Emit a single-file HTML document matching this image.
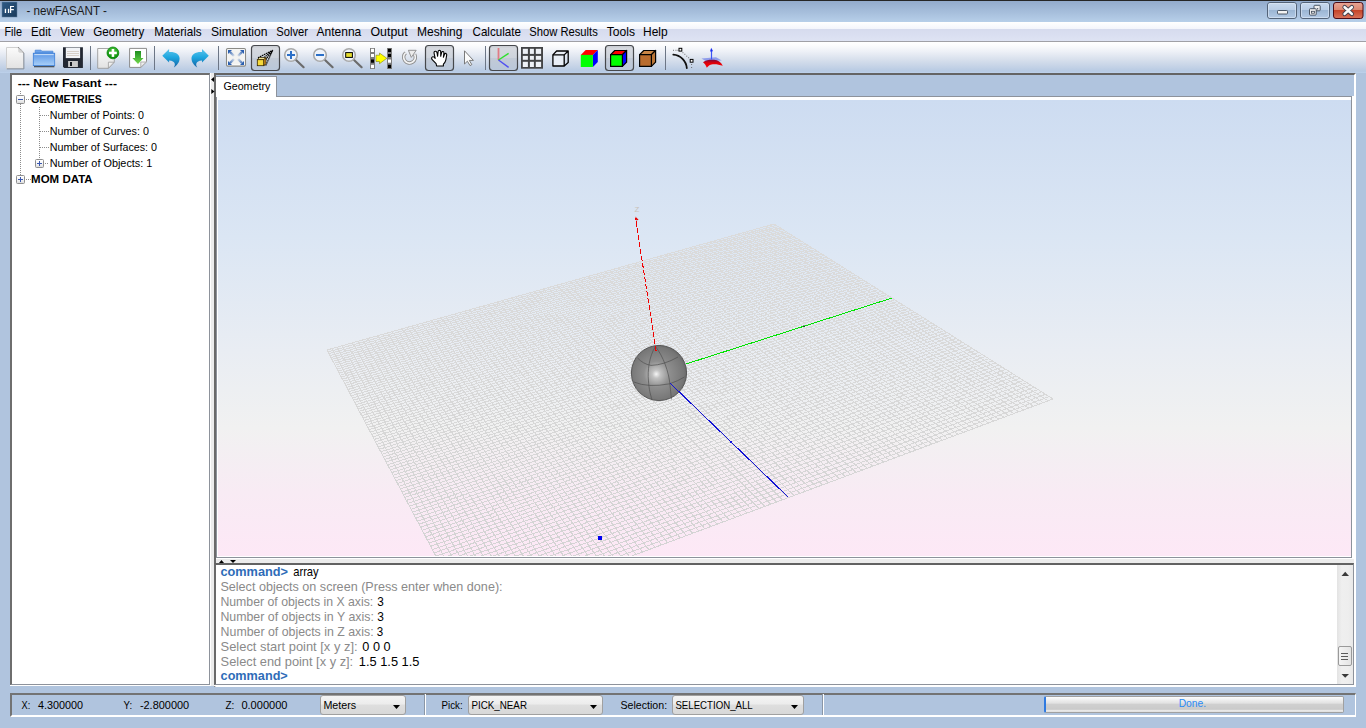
<!DOCTYPE html><html><head><meta charset="utf-8"><title>newFASANT</title><style>
*{margin:0;padding:0;box-sizing:border-box}
html,body{width:1366px;height:728px;overflow:hidden}
body{position:relative;background:#b0c4de;font-family:"Liberation Sans",sans-serif}
.a{position:absolute}
#title{left:0;top:0;width:1366px;height:22px;border-top:1px solid #262626;
 background:linear-gradient(#93abcc,#b7cfe9)}
#menu{left:0;top:22px;width:1366px;height:20px;border-bottom:1px solid #a0a0a6;
 background:linear-gradient(#ffffff 0px,#f3f5fb 7px,#d6dbee 7px,#dee3f3 19px)}
#tool{left:0;top:42px;width:1366px;height:31px;background:linear-gradient(#ffffff 0%,#fcfcfd 10%,#eef1f7 30%,#d9e1ed 55%,#c4d2e6 80%,#b7cae3 94%,#bdd2ec 100%)}
#tree{left:10px;top:73px;width:200px;height:612px;background:#fff;
 border-top:2px solid #6e6e6e;border-left:2px solid #6e6e6e;border-right:1px solid #8d929b;border-bottom:1px solid #8d929b}
#treehl{left:10px;top:685px;width:201px;height:1px;background:#fff}
#vsplit{left:210px;top:73px;width:4px;height:613px;background:#ececec;border-left:1px solid #fff}
#rp{left:214px;top:73px;width:1142px;height:614px;border-top:2px solid #646464;border-left:2px solid #6a6a6a;
 border-right:2px solid #fff;border-bottom:1px solid #fff;background:#b0c4de}
#cvw{left:1352px;top:96px;width:2px;height:467px;background:#fff}
#tab{left:216px;top:76px;width:61px;height:22px;background:#fff;border-top:1px solid #8d929b;border-right:1px solid #8d929b}
#strip{left:277px;top:96px;width:1075px;height:1px;background:#8d929b}
#cv{left:216px;top:97px;width:1136px;height:461px;background:#fff;border-left:1px solid #8d929b;border-right:1px solid #8d929b;border-bottom:1px solid #8d929b}
#canvas{left:218px;top:100px;width:1133px;height:456px;
 background:linear-gradient(#cddcf1 0%,#dbe6f4 30%,#e9edf3 55%,#f1f1f1 72%,#f8ebf4 86%,#fde8f6 100%)}
#hsplit{left:216px;top:558px;width:1138px;height:5px;background:#ececec;border-top:1px solid #fff}
#con{left:214px;top:563px;width:1140px;height:122px;background:#fff;border-top:2px solid #626262;border-left:2px solid #6a6a6a;
 border-right:1px solid #8d929b;border-bottom:1px solid #8d929b}
#conhl{left:214px;top:685px;width:1142px;height:1px;background:#fff}
#sb{left:1337px;top:565px;width:16px;height:119px;background:linear-gradient(90deg,#e3e3e3,#efefef 30%,#eeeeee 70%,#e8e8e8)}
#thumb{left:1338px;top:646px;width:14px;height:20px;border:1px solid #9a9a9a;border-radius:2px;background:linear-gradient(90deg,#f4f4f4,#e4e4e4)}
#status{left:10px;top:693px;width:1346px;height:24px;border-top:2px solid #737373;border-left:2px solid #737373;
 border-right:1px solid #fff;border-bottom:2px solid #fff;background:#b0c4de}
.cb{height:20px;border:1px solid #a0a0a0;border-radius:3px;background:linear-gradient(#f4f4f4,#ececec 45%,#dedede 50%,#d8d8d8)}
.sep{width:2px;height:21px;border-left:1px solid #8a96a6;border-right:1px solid #fff;top:694px}
#prog{left:1044px;top:696px;width:300px;height:17px;border:1px solid #a0a0a0;border-radius:2px;border-left:2px solid #2f7ae0;
 background:linear-gradient(#fdfdfd,#f2f2f2 15%,#e2e2e2 40%,#cfcfcf 50%,#cacaca 82%,#efefef 92%,#d8d8d8)}
</style></head><body>
<div class="a" id="title"></div>
<div class="a" id="menu"></div>
<div class="a" id="tool"></div>
<div class="a" id="tree"></div><div class="a" id="treehl"></div>
<div class="a" id="vsplit"></div>
<div class="a" id="rp"></div>
<div class="a" id="tab"></div><div class="a" id="strip"></div>
<div class="a" id="cvw"></div><div class="a" id="cv"></div><div class="a" id="canvas"></div>
<div class="a" id="hsplit"></div>
<div class="a" id="con"></div><div class="a" id="conhl"></div>
<div class="a" id="sb"></div><div class="a" id="thumb"></div>
<div class="a" id="status"></div>
<div class="a sep" style="left:424px"></div>
<div class="a sep" style="left:822px"></div>
<div class="a cb" style="left:320px;top:695px;width:86px"></div>
<div class="a cb" style="left:468px;top:695px;width:135px"></div>
<div class="a cb" style="left:672px;top:695px;width:132px"></div>
<div class="a" id="prog"></div>
<svg class="a" style="left:218px;top:100px" width="1133" height="456" viewBox="218 100 1133 456"><defs><radialGradient id="sph" cx="0.47" cy="0.52" r="0.62" fx="0.45" fy="0.52"><stop offset="0" stop-color="#f6f6f6"/><stop offset="0.12" stop-color="#c2c2c2"/><stop offset="0.38" stop-color="#8e8e8e"/><stop offset="0.78" stop-color="#767676"/><stop offset="1" stop-color="#555555"/></radialGradient></defs><defs><linearGradient id="gGrid" gradientUnits="userSpaceOnUse" x1="0" y1="224" x2="0" y2="560"><stop offset="0" stop-color="#dbdbdb"/><stop offset="0.45" stop-color="#d9d9d9"/><stop offset="1" stop-color="#d3d3d3"/></linearGradient></defs><path d="M327.0 350.0L468.0 617.0M327.0 350.0L774.0 224.0M332.1 348.6L475.1 614.4M328.0 351.9L776.1 225.3M337.2 347.1L482.1 611.7M329.0 353.7L778.1 226.6M342.3 345.7L489.1 609.1M330.0 355.6L780.2 227.9M347.4 344.3L496.1 606.5M331.0 357.5L782.3 229.2M352.4 342.8L503.0 604.0M332.0 359.4L784.4 230.5M357.5 341.4L509.9 601.4M333.0 361.3L786.5 231.8M362.5 340.0L516.8 598.8M334.0 363.3L788.6 233.2M367.5 338.6L523.7 596.3M335.0 365.2L790.7 234.5M372.5 337.2L530.5 593.7M336.1 367.2L792.9 235.8M377.5 335.8L537.3 591.2M337.1 369.1L795.0 237.2M382.4 334.4L544.1 588.7M338.1 371.1L797.2 238.5M387.4 333.0L550.8 586.1M339.2 373.1L799.4 239.9M392.3 331.6L557.5 583.6M340.3 375.1L801.6 241.3M397.3 330.2L564.2 581.1M341.3 377.1L803.8 242.7M402.2 328.8L570.9 578.7M342.4 379.2L806.0 244.1M407.1 327.4L577.5 576.2M343.5 381.2L808.2 245.5M411.9 326.1L584.1 573.7M344.6 383.3L810.4 246.9M416.8 324.7L590.7 571.3M345.7 385.3L812.7 248.3M421.7 323.3L597.3 568.8M346.8 387.4L815.0 249.7M426.5 322.0L603.8 566.4M347.9 389.5L817.2 251.1M431.3 320.6L610.3 564.0M349.0 391.6L819.5 252.6M436.2 319.2L616.8 561.6M350.1 393.7L821.8 254.0M441.0 317.9L623.2 559.1M351.2 395.9L824.1 255.5M445.7 316.5L629.7 556.8M352.4 398.0L826.5 256.9M450.5 315.2L636.1 554.4M353.5 400.2L828.8 258.4M455.3 313.8L642.4 552.0M354.7 402.4L831.2 259.9M460.0 312.5L648.8 549.6M355.8 404.6L833.5 261.3M464.8 311.2L655.1 547.3M357.0 406.8L835.9 262.8M469.5 309.8L661.4 544.9M358.2 409.0L838.3 264.3M474.2 308.5L667.7 542.6M359.3 411.3L840.7 265.9M478.9 307.2L673.9 540.3M360.5 413.5L843.2 267.4M483.6 305.9L680.2 537.9M361.7 415.8L845.6 268.9M488.2 304.6L686.4 535.6M362.9 418.1L848.0 270.4M492.9 303.2L692.6 533.3M364.2 420.4L850.5 272.0M497.5 301.9L698.7 531.0M365.4 422.7L853.0 273.5M502.2 300.6L704.8 528.7M366.6 425.0L855.5 275.1M506.8 299.3L710.9 526.5M367.9 427.4L858.0 276.7M511.4 298.0L717.0 524.2M369.1 429.7L860.5 278.3M516.0 296.7L723.1 521.9M370.4 432.1L863.1 279.9M520.5 295.4L729.1 519.7M371.6 434.5L865.6 281.5M525.1 294.2L735.1 517.5M372.9 436.9L868.2 283.1M529.7 292.9L741.1 515.2M374.2 439.4L870.8 284.7M534.2 291.6L747.1 513.0M375.5 441.8L873.4 286.3M538.7 290.3L753.0 510.8M376.8 444.3L876.0 288.0M543.3 289.0L759.0 508.6M378.1 446.8L878.6 289.6M547.8 287.8L764.8 506.4M379.4 449.3L881.3 291.3M552.2 286.5L770.7 504.2M380.8 451.8L884.0 293.0M556.7 285.2L776.6 502.0M382.1 454.3L886.6 294.7M561.2 284.0L782.4 499.8M383.4 456.9L889.3 296.3M565.7 282.7L788.2 497.7M384.8 459.5L892.1 298.0M570.1 281.5L794.0 495.5M386.2 462.0L894.8 299.8M574.5 280.2L799.8 493.4M387.5 464.7L897.5 301.5M578.9 279.0L805.5 491.2M388.9 467.3L900.3 303.2M583.4 277.7L811.2 489.1M390.3 469.9L903.1 305.0M587.7 276.5L816.9 487.0M391.7 472.6L905.9 306.7M592.1 275.3L822.6 484.9M393.2 475.3L908.7 308.5M596.5 274.0L828.3 482.7M394.6 478.0L911.5 310.3M600.9 272.8L833.9 480.6M396.0 480.7L914.4 312.1M605.2 271.6L839.5 478.6M397.5 483.5L917.3 313.9M609.6 270.4L845.1 476.5M399.0 486.3L920.2 315.7M613.9 269.1L850.7 474.4M400.4 489.0L923.1 317.5M618.2 267.9L856.2 472.3M401.9 491.9L926.0 319.3M622.5 266.7L861.8 470.3M403.4 494.7L928.9 321.2M626.8 265.5L867.3 468.2M404.9 497.5L931.9 323.0M631.1 264.3L872.8 466.2M406.4 500.4L934.9 324.9M635.3 263.1L878.2 464.1M408.0 503.3L937.9 326.8M639.6 261.9L883.7 462.1M409.5 506.2L940.9 328.7M643.8 260.7L889.1 460.1M411.1 509.2L944.0 330.6M648.1 259.5L894.5 458.1M412.6 512.1L947.0 332.5M652.3 258.3L899.9 456.0M414.2 515.1L950.1 334.5M656.5 257.1L905.3 454.0M415.8 518.1L953.2 336.4M660.7 255.9L910.7 452.0M417.4 521.2L956.3 338.4M664.9 254.8L916.0 450.1M419.0 524.2L959.5 340.3M669.1 253.6L921.3 448.1M420.6 527.3L962.6 342.3M673.2 252.4L926.6 446.1M422.3 530.4L965.8 344.3M677.4 251.2L931.9 444.1M423.9 533.6L969.0 346.3M681.5 250.1L937.1 442.2M425.6 536.7L972.3 348.4M685.7 248.9L942.4 440.2M427.3 539.9L975.5 350.4M689.8 247.7L947.6 438.3M429.0 543.1L978.8 352.4M693.9 246.6L952.8 436.3M430.7 546.3L982.1 354.5M698.0 245.4L958.0 434.4M432.4 549.6L985.4 356.6M702.1 244.3L963.1 432.5M434.1 552.9L988.7 358.7M706.2 243.1L968.3 430.6M435.9 556.2L992.1 360.8M710.3 242.0L973.4 428.7M437.7 559.5L995.5 362.9M714.3 240.8L978.5 426.8M439.4 562.9L998.9 365.1M718.4 239.7L983.6 424.9M441.2 566.3L1002.3 367.2M722.4 238.5L988.7 423.0M443.0 569.7L1005.8 369.4M726.4 237.4L993.7 421.1M444.9 573.2L1009.3 371.6M730.5 236.3L998.8 419.2M446.7 576.7L1012.8 373.8M734.5 235.1L1003.8 417.3M448.6 580.2L1016.3 376.0M738.5 234.0L1008.8 415.5M450.4 583.7L1019.9 378.2M742.5 232.9L1013.8 413.6M452.3 587.3L1023.4 380.5M746.4 231.8L1018.7 411.8M454.2 590.9L1027.0 382.7M750.4 230.7L1023.7 409.9M456.1 594.5L1030.7 385.0M754.4 229.5L1028.6 408.1M458.1 598.2L1034.3 387.3M758.3 228.4L1033.5 406.3M460.0 601.9L1038.0 389.6M762.2 227.3L1038.4 404.4M462.0 605.6L1041.7 391.9M766.2 226.2L1043.3 402.6M464.0 609.4L1045.4 394.3M770.1 225.1L1048.2 400.8M466.0 613.2L1049.2 396.6M774.0 224.0L1053.0 399.0M468.0 617.0L1053.0 399.0" stroke="url(#gGrid)" stroke-width="1" fill="none" shape-rendering="crispEdges"/><path d="M635.3 216.5L638.6 219.8L636.4 220.4Z" fill="#e00000"/><text x="634.6" y="212" font-size="8" fill="#c9c1b8" textLength="4.8" lengthAdjust="spacingAndGlyphs">Z</text><line x1="686" y1="364" x2="892" y2="298" stroke="#00e400" stroke-width="1" shape-rendering="crispEdges"/><rect x="803" y="325.5" width="2" height="1.5" fill="#106010"/><circle cx="659" cy="373" r="27.6" fill="url(#sph)" stroke="#4e4e4e" stroke-width="0.9"/><g fill="none" stroke="#505050" stroke-width="0.7"><path d="M655.4 346.7C649 356 647.5 372 648.4 380C649 390 650.5 395 652 399.5"/><path d="M655.8 347C663 356 669 372 670 385C670.7 392 671.2 396 671.4 399.5"/><path d="M637.5 357.9Q643 364 651 365.4Q664 365 678 357"/><path d="M633.9 382Q648 388 669.6 383.8Q678 381 684.5 377"/></g><line x1="656.1" y1="351" x2="635.5" y2="218" stroke="#f00000" stroke-width="1" stroke-dasharray="5 2" shape-rendering="crispEdges"/><line x1="670" y1="383" x2="788" y2="497" stroke="#1414d4" stroke-width="1" shape-rendering="crispEdges"/><rect x="730" y="441" width="2" height="2" fill="#1010e0"/><rect x="598" y="536" width="4" height="4" fill="#0000f0"/></svg>
<svg class="a" style="left:0;top:0" width="1366" height="728" viewBox="0 0 1366 728" font-family="Liberation Sans, sans-serif">
<defs>
<linearGradient id="gPage" x1="0" y1="0" x2="0" y2="1"><stop offset="0" stop-color="#fbfbfb"/><stop offset="1" stop-color="#e2e2e2"/></linearGradient>
<linearGradient id="gFold" x1="0" y1="0" x2="1" y2="1"><stop offset="0" stop-color="#ffffff"/><stop offset="1" stop-color="#c8c8c8"/></linearGradient>
<linearGradient id="gFolder" x1="0" y1="0" x2="0" y2="1"><stop offset="0" stop-color="#5b96e6"/><stop offset="1" stop-color="#a9d0f8"/></linearGradient>
<linearGradient id="gArrowG" x1="0" y1="0" x2="0" y2="1"><stop offset="0" stop-color="#1f8d1f"/><stop offset="0.5" stop-color="#45b435"/><stop offset="1" stop-color="#78d84e"/></linearGradient>
<linearGradient id="gUndo" x1="0" y1="0" x2="0" y2="1"><stop offset="0" stop-color="#5cc4ec"/><stop offset="0.45" stop-color="#1ea6df"/><stop offset="1" stop-color="#1562a5"/></linearGradient>
<linearGradient id="gPress" x1="0" y1="0" x2="0" y2="1"><stop offset="0" stop-color="#c6c9cf"/><stop offset="0.12" stop-color="#d6d9df"/><stop offset="0.5" stop-color="#cdd3dc"/><stop offset="0.52" stop-color="#c2cad6"/><stop offset="1" stop-color="#b9c7da"/></linearGradient>
<radialGradient id="gGreen" cx="0.5" cy="0.35" r="0.6"><stop offset="0" stop-color="#5cd04a"/><stop offset="1" stop-color="#058a05"/></radialGradient>
<linearGradient id="gHandle" x1="0" y1="0" x2="1" y2="0"><stop offset="0" stop-color="#8a8a8a"/><stop offset="1" stop-color="#5a5a5a"/></linearGradient>
</defs>
<g id="toolbar">
<!-- new -->
<path d="M6.5 47.5H18.2L23.5 52.8V68.5H6.5Z" fill="url(#gPage)" stroke="#cfcfcf"/>
<path d="M23.9 53V68.9H6.8" fill="none" stroke="#7d8896" stroke-width="0.9"/>
<path d="M18.2 47.5L23.5 52.8" stroke="#6f6f6f" stroke-width="1.1" stroke-dasharray="1 0.6"/>
<path d="M18.2 47.8V51.5Q18.5 52.6 19.7 52.8H23.2Z" fill="#d4d4d4"/>
<!-- folder -->
<path d="M35.2 53V50.2H41L42 51.2H52.9V53Z" fill="#6aa2ea" stroke="#4a86d8" stroke-width="0.8"/>
<rect x="33.3" y="53.2" width="21.4" height="12.4" fill="url(#gFolder)" stroke="#3d7fd8" stroke-width="0.8"/>
<rect x="34.3" y="54.2" width="19.4" height="0.9" fill="#d8e8fb"/>
<rect x="34" y="66" width="20.4" height="1.3" fill="#4a535e"/>
<!-- floppy -->
<path d="M63 47.2H82.9V67.9H64.2L63 66.7Z" fill="#232833"/>
<rect x="65.8" y="47.6" width="14.3" height="10.5" fill="#f1f3f7"/>
<rect x="67" y="51" width="12" height="0.9" fill="#d3cbc3"/>
<rect x="67" y="53" width="12" height="0.9" fill="#d3cbc3"/>
<rect x="67" y="55" width="12" height="0.9" fill="#d3cbc3"/>
<rect x="68.1" y="61" width="9.8" height="6" fill="#c9c9c9"/>
<rect x="70" y="62" width="2" height="4" fill="#15181e"/>
<!-- separators -->
<rect x="90" y="46" width="1" height="24" fill="#6c7686"/>
<rect x="154" y="46" width="1" height="24" fill="#6c7686"/>
<rect x="218" y="46" width="1" height="24" fill="#6c7686"/>
<rect x="485" y="46" width="1" height="24" fill="#6c7686"/>
<rect x="665" y="46" width="1" height="24" fill="#6c7686"/>
<!-- new + -->
<path d="M97.7 48.5H111L114.3 52V61.8L108.4 68.3H97.7Z" fill="url(#gPage)" stroke="#9c9c9c" stroke-width="0.9"/>
<path d="M108.4 68.3V62.2H114.3Z" fill="url(#gFold)" stroke="#9c9c9c" stroke-width="0.8"/>
<circle cx="112.9" cy="52.9" r="5.9" fill="url(#gGreen)" stroke="#0a8a0a" stroke-width="0.8"/>
<rect x="109" y="51.7" width="7.8" height="2.5" fill="#fff"/>
<rect x="111.7" y="49" width="2.5" height="7.9" fill="#fff"/>
<!-- import -->
<path d="M129.6 48.4H146.5V61.5L140.8 67.4H129.6Z" fill="#fff" stroke="#8c8c8c" stroke-width="1"/>
<path d="M140.8 67.4V62H146.5Z" fill="url(#gFold)" stroke="#9c9c9c" stroke-width="0.8"/>
<path d="M135 51H141V58H143.5L138 64.1L132.4 58H135Z" fill="url(#gArrowG)"/>
<!-- undo / redo -->
<path id="undo" d="M162.3 55.7L169.1 49V52.1C175.5 51.8 179.6 54.3 179.6 58.6C179.6 62.2 177 65.5 173.8 67.6C175.6 64.6 175.8 61 169.1 60.4V62.6Z" fill="url(#gUndo)"/>
<path d="M162.3 55.7L169.1 49V52.1C175.5 51.8 179.6 54.3 179.6 58.6C179.6 62.2 177 65.5 173.8 67.6C175.6 64.6 175.8 61 169.1 60.4V62.6Z" fill="url(#gUndo)" transform="translate(371.1 0) scale(-1 1)"/>
<!-- fit -->
<defs>
<linearGradient id="gF1" gradientUnits="userSpaceOnUse" x1="229" y1="51" x2="234" y2="56"><stop offset="0" stop-color="#2a5fb0"/><stop offset="1" stop-color="#2a5fb0" stop-opacity="0.15"/></linearGradient>
<linearGradient id="gF2" gradientUnits="userSpaceOnUse" x1="243" y1="51" x2="238" y2="56"><stop offset="0" stop-color="#2a5fb0"/><stop offset="1" stop-color="#2a5fb0" stop-opacity="0.15"/></linearGradient>
<linearGradient id="gF3" gradientUnits="userSpaceOnUse" x1="229" y1="64" x2="234" y2="59"><stop offset="0" stop-color="#2a5fb0"/><stop offset="1" stop-color="#2a5fb0" stop-opacity="0.15"/></linearGradient>
<linearGradient id="gF4" gradientUnits="userSpaceOnUse" x1="243" y1="64" x2="238" y2="59"><stop offset="0" stop-color="#2a5fb0"/><stop offset="1" stop-color="#2a5fb0" stop-opacity="0.15"/></linearGradient>
</defs>
<rect x="226.6" y="48.6" width="18.8" height="17.4" rx="1.2" fill="#f3f3f1" stroke="#8a8a86" stroke-width="1.3"/>
<rect x="227.7" y="49.7" width="16.6" height="15.2" fill="none" stroke="#fff" stroke-width="0.8"/>
<path d="M228 50H232L228 54Z" fill="#2a5fb0"/><path d="M230 52L234 56" stroke="url(#gF1)" stroke-width="2.4"/>
<path d="M244 50H240L244 54Z" fill="#2a5fb0"/><path d="M242 52L238 56" stroke="url(#gF2)" stroke-width="2.4"/>
<path d="M228 65H232L228 61Z" fill="#2a5fb0"/><path d="M230 63L234 59" stroke="url(#gF3)" stroke-width="2.4"/>
<path d="M244 65H240L244 61Z" fill="#2a5fb0"/><path d="M242 63L238 59" stroke="url(#gF4)" stroke-width="2.4"/>
<!-- pressed buttons -->
<rect x="251.5" y="45.5" width="28" height="25" rx="3" fill="url(#gPress)" stroke="#46484c" stroke-width="1.2"/>
<rect x="425.5" y="45.5" width="28" height="25" rx="3" fill="url(#gPress)" stroke="#46484c" stroke-width="1.2"/>
<rect x="489.5" y="45.5" width="28" height="25" rx="3" fill="url(#gPress)" stroke="#46484c" stroke-width="1.2"/>
<rect x="605.5" y="45.5" width="28" height="25" rx="3" fill="url(#gPress)" stroke="#46484c" stroke-width="1.2"/>
<!-- perspective cube -->
<g stroke="#000" stroke-width="1.15" stroke-dasharray="1.6 0.6" fill="none">
<path d="M258 57.8L272.8 50.3M263.8 57.8L272.8 50.3M265.7 59.6L272.8 50.3M265.7 65.6L272.8 50.3"/>
</g>
<path d="M257.3 59.7L259.3 57.6H265.9L263.9 59.7Z" fill="#fff3a0" stroke="#2a2000" stroke-width="0.8"/>
<rect x="257.3" y="59.7" width="6.6" height="6" fill="#f5d93c" stroke="#3a2a00" stroke-width="0.8"/>
<path d="M263.9 59.7L265.9 57.6V63.6L263.9 65.7Z" fill="#f0a020" stroke="#2a2000" stroke-width="0.8"/>
<!-- zoom in -->
<g>
<line x1="296" y1="60" x2="303.6" y2="67.2" stroke="#6c6c6c" stroke-width="2.2" stroke-linecap="round"/>
<circle cx="291" cy="55" r="6.3" fill="#eef3fa" stroke="#a9a9a9" stroke-width="1.6"/>
<rect x="287" y="54" width="8" height="2" fill="#2b6fc7"/>
<rect x="290" y="51" width="2" height="8" fill="#2b6fc7"/>
</g>
<g>
<line x1="325" y1="60" x2="332.6" y2="67.2" stroke="#6c6c6c" stroke-width="2.2" stroke-linecap="round"/>
<circle cx="320" cy="55" r="6.3" fill="#eef3fa" stroke="#a9a9a9" stroke-width="1.6"/>
<rect x="316" y="54" width="8" height="2" fill="#2b6fc7"/>
</g>
<g>
<line x1="354" y1="60" x2="361.6" y2="67.2" stroke="#6c6c6c" stroke-width="2.2" stroke-linecap="round"/>
<circle cx="349" cy="55" r="6.3" fill="#eef3fa" stroke="#a9a9a9" stroke-width="1.6"/>
<rect x="345.7" y="52.6" width="6.7" height="4.8" fill="#e6dd2e" stroke="#000" stroke-width="1"/>
</g>
<!-- film strips -->
<rect x="370" y="48" width="5" height="21" fill="#7c7c7c"/>
<rect x="371" y="48.8" width="3" height="3.2" fill="#fff"/><rect x="371" y="54" width="3" height="3" fill="#fff"/>
<rect x="371" y="59.5" width="3" height="3.2" fill="#000"/><rect x="371" y="64.8" width="3" height="3.3" fill="#fff"/>
<rect x="387" y="48" width="5" height="21" fill="#7c7c7c"/>
<rect x="388" y="48.8" width="3" height="3.2" fill="#000"/><rect x="388" y="54" width="3" height="3" fill="#000"/>
<rect x="388" y="59.5" width="3" height="3.2" fill="#fff"/><rect x="388" y="64.8" width="3" height="3.3" fill="#000"/>
<path d="M376 55.2H379.5V53L386.8 58.3L379.5 63.7V61.5H376Z" fill="#ffff00" stroke="#6d6d00" stroke-width="0.5"/>
<!-- rotate -->
<path d="M405.6 52.9A5.8 5.8 0 1 0 414.6 54.4" fill="none" stroke="#8e8e8e" stroke-width="3.6"/>
<path d="M405.6 52.9A5.8 5.8 0 1 0 414.6 54.4" fill="none" stroke="#f2f2f2" stroke-width="1.8"/>
<path d="M408.4 50.3H416.2L411.3 57.4Z" fill="#ececec" stroke="#8a8a8a" stroke-width="0.9" stroke-linejoin="round"/>
<!-- hand -->
<path d="M436.6 66L436.1 63.6L432.2 59.7Q430.9 57.8 432.4 56.9Q433.8 56.3 435.2 58.4L434.1 53.3Q433.8 51.4 435.3 51.2Q436.6 51.1 437.1 53L437.6 56.3L438.1 51.6Q438.3 50.3 439.5 50.3Q440.7 50.4 440.7 51.8L440.7 56.3L441.6 52.5Q442 51.2 443.1 51.5Q444.1 51.8 443.9 53.1L443.4 57.2L444.5 54.3Q445 53.1 446 53.4Q447 53.8 446.7 55.2L445.8 60.1Q445.2 62.5 443.4 64.1L443.4 66Z" fill="#fff" stroke="#000" stroke-width="1.1" stroke-linejoin="round"/>
<!-- pointer -->
<path d="M464.5 50.8V64L467.4 61.2L470 65.6L471.8 64.6L469.3 60.4H473.4Z" fill="#fcfcfc" stroke="#747474" stroke-width="0.95" stroke-linejoin="round"/>
<!-- axes -->
<line x1="498.5" y1="48" x2="498.5" y2="60" stroke="#e07c84" stroke-width="1.8"/>
<line x1="498.5" y1="60" x2="508.6" y2="53.3" stroke="#2ee02e" stroke-width="1.4"/>
<line x1="498.5" y1="60" x2="508.6" y2="67.4" stroke="#5050f0" stroke-width="1.4"/>
<!-- grid -->
<rect x="521" y="47" width="22" height="21.7" fill="#434446"/>
<g fill="#eef1f6">
<rect x="522.8" y="48.8" width="5.1" height="5.1"/><rect x="529.9" y="48.8" width="4" height="5.1"/><rect x="535.8" y="48.8" width="5.3" height="5.1"/>
<rect x="522.8" y="55.9" width="5.1" height="3.9"/><rect x="529.9" y="55.9" width="4" height="3.9"/><rect x="535.8" y="55.9" width="5.3" height="3.9"/>
<rect x="522.8" y="61.8" width="5.1" height="5.2"/><rect x="529.9" y="61.8" width="4" height="5.2"/><rect x="535.8" y="61.8" width="5.3" height="5.2"/>
</g>
<!-- wire cube -->
<g fill="none" stroke="#000" stroke-width="1.3" stroke-linejoin="round">
<rect x="552.9" y="54.9" width="11.3" height="11.1" fill="#e9eef6"/>
<path d="M552.9 54.9L556.6 51H568.2L564.2 54.9M568.2 51V62.6L564.2 66"/>
</g>
<!-- color cube -->
<path d="M580.8 54.9L585.7 49.9H597.8L592.9 54.9Z" fill="#ff0000"/>
<path d="M592.9 54.9L597.8 49.9V62L592.9 67Z" fill="#0000ff"/>
<rect x="580.8" y="54.9" width="12.1" height="12.1" fill="#00ff00"/>
<!-- outlined color cube -->
<g stroke="#000" stroke-width="1.2" stroke-linejoin="round">
<path d="M610.6 54.7L614.8 50.5H626.6L622.4 54.7Z" fill="#ff0000"/>
<path d="M622.4 54.7L626.6 50.5V62.2L622.4 66.4Z" fill="#0000ff"/>
<rect x="610.6" y="54.7" width="11.8" height="11.7" fill="#00ff00"/>
</g>
<!-- wood cube -->
<g stroke="#000" stroke-width="1.2" stroke-linejoin="round">
<path d="M639.6 54.7L643.8 50.5H655.6L651.4 54.7Z" fill="#c98545"/>
<path d="M651.4 54.7L655.6 50.5V62.2L651.4 66.4Z" fill="#b87436"/>
<rect x="639.6" y="54.7" width="11.8" height="11.7" fill="#b96c2e"/>
</g>
<!-- curve -->
<path d="M673.3 54.6A14.5 14.5 0 0 1 686.8 68" fill="none" stroke="#111" stroke-width="1.8" stroke-linecap="round"/>
<g fill="#555"><rect x="673" y="49.8" width="0.9" height="0.9"/><rect x="675.5" y="49.8" width="0.9" height="0.9"/><rect x="677.5" y="49.8" width="0.9" height="0.9"/>
<rect x="682.5" y="52.3" width="0.9" height="0.9"/><rect x="684.4" y="53.8" width="0.9" height="0.9"/><rect x="686.3" y="55.7" width="0.9" height="0.9"/><rect x="688.2" y="57.3" width="0.9" height="0.9"/>
<rect x="691.2" y="64" width="0.9" height="0.9"/><rect x="691.2" y="67" width="0.9" height="0.9"/></g>
<rect x="679" y="48.3" width="2.8" height="2.8" fill="#fff" stroke="#000" stroke-width="1"/>
<rect x="690.2" y="59.4" width="2.8" height="2.8" fill="#fff" stroke="#000" stroke-width="1"/>
<!-- surface -->
<defs><linearGradient id="gSurf" x1="0" y1="0" x2="0" y2="1"><stop offset="0" stop-color="#7a0a3a"/><stop offset="0.4" stop-color="#e00008"/><stop offset="1" stop-color="#ff0000"/></linearGradient></defs>
<path d="M701.5 58.4L716 57.3L721.8 60.6L705.7 61Z" fill="#6f7fea" opacity="0.7"/>
<path d="M703 62.3C706 60 710 59.6 714 59.8C718 60.3 721 62 722.8 65.8C719 64.4 715 63.8 711.5 64.4C709 65 707.6 66.5 706.8 67.8C706 65.5 705 64 703 62.3Z" fill="url(#gSurf)"/>
<line x1="711.5" y1="59.6" x2="711.5" y2="49.5" stroke="#3d55f5" stroke-width="1.2"/>
<path d="M710 51.5L711.2 47.8L713 51.3Z" fill="#1b2df0"/>
</g>
<!-- window buttons -->
<defs>
<linearGradient id="gWB" x1="0" y1="0" x2="0" y2="1"><stop offset="0" stop-color="#c9daee"/><stop offset="0.45" stop-color="#b9cde6"/><stop offset="0.5" stop-color="#9cb6d4"/><stop offset="1" stop-color="#b4cbe6"/></linearGradient>
<linearGradient id="gWC" x1="0" y1="0" x2="0" y2="1"><stop offset="0" stop-color="#e8a595"/><stop offset="0.45" stop-color="#dc8872"/><stop offset="0.5" stop-color="#c5452a"/><stop offset="1" stop-color="#d9735b"/></linearGradient>
</defs>
<rect x="1267.5" y="2.5" width="29" height="16" rx="2.5" fill="url(#gWB)" stroke="#536378"/>
<rect x="1268.5" y="3.5" width="27" height="14" rx="1.5" fill="none" stroke="#dce8f5" stroke-width="0.8" opacity="0.8"/>
<rect x="1277.5" y="10.5" width="10" height="3.5" rx="0.8" fill="#f2f2f2" stroke="#3c4858" stroke-width="0.9"/>
<rect x="1300.5" y="2.5" width="29" height="16" rx="2.5" fill="url(#gWB)" stroke="#536378"/>
<rect x="1301.5" y="3.5" width="27" height="14" rx="1.5" fill="none" stroke="#dce8f5" stroke-width="0.8" opacity="0.8"/>
<rect x="1314" y="5.3" width="6.2" height="5.5" rx="0.8" fill="#eeeeee" stroke="#3c4858" stroke-width="0.9"/>
<rect x="1309.5" y="8.7" width="6.7" height="6.4" rx="0.8" fill="#eeeeee" stroke="#3c4858" stroke-width="0.9"/>
<rect x="1311.4" y="11.3" width="3" height="1.9" fill="#f4f4f4" stroke="#3c4858" stroke-width="0.8"/><rect x="1316.8" y="8.2" width="1.4" height="1.2" fill="#3c4858"/>
<rect x="1333.5" y="2.5" width="29.5" height="16" rx="2.5" fill="url(#gWC)" stroke="#4c0c16"/>
<path d="M1344.6 7.2L1348.2 10.5L1351.8 7.2M1344.6 13.9L1348.2 10.6L1351.8 13.9" fill="none" stroke="#3f3f4c" stroke-width="4.4" stroke-linecap="round"/>
<path d="M1344.6 7.2L1348.2 10.5L1351.8 7.2M1344.6 13.9L1348.2 10.6L1351.8 13.9" fill="none" stroke="#fafafa" stroke-width="2.6" stroke-linecap="round"/>
<!-- app icon -->
<defs><linearGradient id="gApp" x1="0" y1="0" x2="1" y2="1"><stop offset="0" stop-color="#2d5a86"/><stop offset="1" stop-color="#1b3a5a"/></linearGradient></defs>
<rect x="2" y="2" width="15" height="15" fill="url(#gApp)"/>
<rect x="2" y="2" width="15" height="15" fill="none" stroke="#5f7f9f" stroke-width="0.5"/>
<rect x="4.8" y="8.8" width="1.3" height="4.2" fill="#fff"/><rect x="7.9" y="8.8" width="1.3" height="4.2" fill="#fff"/>
<path d="M10 13V5.9H14V7H11.2V9H13.8V10.2H11.2V13Z" fill="#fff"/>
<!-- tree connectors -->
<defs><linearGradient id="gTB" x1="0" y1="0" x2="0" y2="1"><stop offset="0" stop-color="#ffffff"/><stop offset="0.55" stop-color="#f4f4f4"/><stop offset="1" stop-color="#d9d9d9"/></linearGradient></defs>
<g fill="#8c8c8c">
<path d="M20 91h1v1h-1zM20 93h1v1h-1z"/>
<path d="M26 99h1v1h-1zM28 99h1v1h-1zM30 99h1v1h-1z"/>
<path d="M26 179h1v1h-1zM28 179h1v1h-1zM30 179h1v1h-1z"/>
</g>
<path d="M20.5 104V175" stroke="#8c8c8c" stroke-dasharray="1 1" shape-rendering="crispEdges"/>
<path d="M39.5 107V159" stroke="#8c8c8c" stroke-dasharray="1 1" shape-rendering="crispEdges"/>
<path d="M40 115.5H49M40 131.5H49M40 147.5H49M45 163.5H49" stroke="#8c8c8c" stroke-dasharray="1 1" shape-rendering="crispEdges"/>
<rect x="16.5" y="95.5" width="8" height="8" rx="1" fill="url(#gTB)" stroke="#8f8f8f"/>
<rect x="18" y="99" width="5" height="1" fill="#3a58b0"/>
<rect x="16.5" y="175.5" width="8" height="8" rx="1" fill="url(#gTB)" stroke="#8f8f8f"/>
<rect x="18" y="179" width="5" height="1" fill="#3a58b0"/><rect x="20" y="177" width="1" height="5" fill="#3a58b0"/>
<rect x="35.5" y="159.5" width="8" height="8" rx="1" fill="url(#gTB)" stroke="#8f8f8f"/>
<rect x="37" y="163" width="5" height="1" fill="#3a58b0"/><rect x="39" y="161" width="1" height="5" fill="#3a58b0"/>
<!-- splitter arrows -->
<path d="M211 79.5L214 77V82Z" fill="#000"/>
<path d="M214.5 91.5L211.3 89V94Z" fill="#000"/>
<path d="M221.5 560L219 563H224Z" fill="#000"/>
<path d="M230 560H236L233 563Z" fill="#000"/>
<!-- combo arrows -->
<path d="M393 705H400L396.5 709Z" fill="#000"/>
<path d="M590 705H597L593.5 709Z" fill="#000"/>
<path d="M791 705H798L794.5 709Z" fill="#000"/>
<!-- scrollbar -->
<path d="M1341.5 576L1345.2 571.8L1349 576Z" fill="#3a3a3a"/>
<path d="M1341.5 674H1349L1345.2 677.8Z" fill="#3a3a3a"/>
<path d="M1341 653h7M1341 656h7M1341 659h7" stroke="#5a5a5a" stroke-width="1" shape-rendering="crispEdges"/>

<text x="26.40" y="15" font-size="12.4" fill="#1a1a1a" textLength="80.47" lengthAdjust="spacingAndGlyphs">- newFASANT -</text><text x="4.50" y="36" font-size="12.4" fill="#000" textLength="17.41" lengthAdjust="spacingAndGlyphs">File</text><text x="31.10" y="36" font-size="12.4" fill="#000" textLength="19.82" lengthAdjust="spacingAndGlyphs">Edit</text><text x="60.20" y="36" font-size="12.4" fill="#000" textLength="24.28" lengthAdjust="spacingAndGlyphs">View</text><text x="93.30" y="36" font-size="12.4" fill="#000" textLength="51.00" lengthAdjust="spacingAndGlyphs">Geometry</text><text x="154.30" y="36" font-size="12.4" fill="#000" textLength="47.26" lengthAdjust="spacingAndGlyphs">Materials</text><text x="211.00" y="36" font-size="12.4" fill="#000" textLength="56.48" lengthAdjust="spacingAndGlyphs">Simulation</text><text x="276.30" y="36" font-size="12.4" fill="#000" textLength="31.65" lengthAdjust="spacingAndGlyphs">Solver</text><text x="316.60" y="36" font-size="12.4" fill="#000" textLength="44.64" lengthAdjust="spacingAndGlyphs">Antenna</text><text x="370.50" y="36" font-size="12.4" fill="#000" textLength="37.12" lengthAdjust="spacingAndGlyphs">Output</text><text x="417.10" y="36" font-size="12.4" fill="#000" textLength="45.39" lengthAdjust="spacingAndGlyphs">Meshing</text><text x="472.50" y="36" font-size="12.4" fill="#000" textLength="48.39" lengthAdjust="spacingAndGlyphs">Calculate</text><text x="529.30" y="36" font-size="12.4" fill="#000" textLength="68.44" lengthAdjust="spacingAndGlyphs">Show Results</text><text x="606.70" y="36" font-size="12.4" fill="#000" textLength="28.25" lengthAdjust="spacingAndGlyphs">Tools</text><text x="643.10" y="36" font-size="12.4" fill="#000" textLength="24.56" lengthAdjust="spacingAndGlyphs">Help</text><text x="17.70" y="87" font-size="11" fill="#000" font-weight="bold" textLength="99.30" lengthAdjust="spacingAndGlyphs">--- New Fasant ---</text><text x="31.10" y="103" font-size="11" fill="#000" font-weight="bold" textLength="70.77" lengthAdjust="spacingAndGlyphs">GEOMETRIES</text><text x="49.70" y="119" font-size="11" fill="#000" textLength="94.27" lengthAdjust="spacingAndGlyphs">Number of Points: 0</text><text x="49.70" y="135" font-size="11" fill="#000" textLength="99.25" lengthAdjust="spacingAndGlyphs">Number of Curves: 0</text><text x="49.70" y="151" font-size="11" fill="#000" textLength="107.34" lengthAdjust="spacingAndGlyphs">Number of Surfaces: 0</text><text x="49.70" y="167" font-size="11" fill="#000" textLength="102.67" lengthAdjust="spacingAndGlyphs">Number of Objects: 1</text><text x="31.10" y="183" font-size="11" fill="#000" font-weight="bold" textLength="61.51" lengthAdjust="spacingAndGlyphs">MOM DATA</text><text x="223.40" y="90" font-size="11" fill="#000" textLength="46.90" lengthAdjust="spacingAndGlyphs">Geometry</text><text x="220.40" y="576" font-size="12.4" fill="#2e6cb8" font-weight="bold" textLength="67.56" lengthAdjust="spacingAndGlyphs">command&gt;</text><text x="293.20" y="576" font-size="12.4" fill="#000" textLength="25.48" lengthAdjust="spacingAndGlyphs">array</text><text x="220.40" y="591" font-size="12.4" fill="#8a8a8a" textLength="282.19" lengthAdjust="spacingAndGlyphs">Select objects on screen (Press enter when done):</text><text x="220.40" y="606" font-size="12.4" fill="#8a8a8a" textLength="152.89" lengthAdjust="spacingAndGlyphs">Number of objects in X axis:</text><text x="377.30" y="606" font-size="12.4" fill="#000" textLength="6.55" lengthAdjust="spacingAndGlyphs">3</text><text x="220.40" y="621" font-size="12.4" fill="#8a8a8a" textLength="153.43" lengthAdjust="spacingAndGlyphs">Number of objects in Y axis:</text><text x="377.30" y="621" font-size="12.4" fill="#000" textLength="6.65" lengthAdjust="spacingAndGlyphs">3</text><text x="220.60" y="636" font-size="12.4" fill="#8a8a8a" textLength="153.03" lengthAdjust="spacingAndGlyphs">Number of objects in Z axis:</text><text x="376.80" y="636" font-size="12.4" fill="#000" textLength="6.45" lengthAdjust="spacingAndGlyphs">3</text><text x="220.60" y="651" font-size="12.4" fill="#8a8a8a" textLength="136.96" lengthAdjust="spacingAndGlyphs">Select start point [x y z]:</text><text x="362.30" y="651" font-size="12.4" fill="#000" textLength="28.25" lengthAdjust="spacingAndGlyphs">0 0 0</text><text x="220.60" y="666" font-size="12.4" fill="#8a8a8a" textLength="132.58" lengthAdjust="spacingAndGlyphs">Select end point [x y z]:</text><text x="358.80" y="666" font-size="12.4" fill="#000" textLength="60.64" lengthAdjust="spacingAndGlyphs">1.5 1.5 1.5</text><text x="220.60" y="680" font-size="12.4" fill="#2e6cb8" font-weight="bold" textLength="67.16" lengthAdjust="spacingAndGlyphs">command&gt;</text><text x="21.60" y="709" font-size="11" fill="#000" textLength="8.74" lengthAdjust="spacingAndGlyphs">X:</text><text x="38.00" y="709" font-size="11" fill="#000" textLength="45.11" lengthAdjust="spacingAndGlyphs">4.300000</text><text x="123.60" y="709" font-size="11" fill="#000" textLength="8.60" lengthAdjust="spacingAndGlyphs">Y:</text><text x="139.90" y="709" font-size="11" fill="#000" textLength="49.24" lengthAdjust="spacingAndGlyphs">-2.800000</text><text x="225.40" y="709" font-size="11" fill="#000" textLength="8.89" lengthAdjust="spacingAndGlyphs">Z:</text><text x="241.40" y="709" font-size="11" fill="#000" textLength="46.11" lengthAdjust="spacingAndGlyphs">0.000000</text><text x="323.40" y="709" font-size="11" fill="#000" textLength="32.76" lengthAdjust="spacingAndGlyphs">Meters</text><text x="441.60" y="709" font-size="11" fill="#000" textLength="21.07" lengthAdjust="spacingAndGlyphs">Pick:</text><text x="471.40" y="709" font-size="11" fill="#000" textLength="55.59" lengthAdjust="spacingAndGlyphs">PICK_NEAR</text><text x="620.50" y="709" font-size="11" fill="#000" textLength="46.61" lengthAdjust="spacingAndGlyphs">Selection:</text><text x="675.40" y="709" font-size="11" fill="#000" textLength="77.33" lengthAdjust="spacingAndGlyphs">SELECTION_ALL</text><text x="1178.70" y="707" font-size="11" fill="#2a8af5" textLength="27.48" lengthAdjust="spacingAndGlyphs">Done.</text>
</svg>
</body></html>
